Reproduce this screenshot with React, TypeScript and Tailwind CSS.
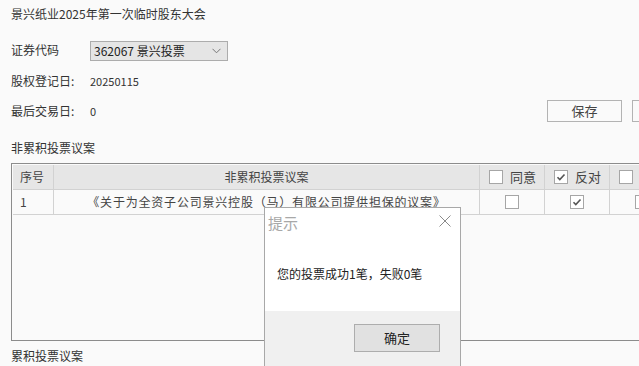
import { ReactNode } from "react";

const Box = ({ checked }: { checked?: boolean }) => (
  <span className="inline-flex items-center justify-center w-[14px] h-[14px] border border-[#a6a6a6] bg-white shrink-0">
    {checked && (
      <svg width="10" height="10" viewBox="0 0 10 10">
        <path d="M1.5 5.2 L3.8 7.5 L8.5 2.5" fill="none" stroke="#555" strokeWidth="1.6" />
      </svg>
    )}
  </span>
);

const Row = ({ children, className }: { children: ReactNode; className: string }) => (
  <div className={`flex items-center px-[11px] ${className}`}>{children}</div>
);

const App = () => {
  return (
    <div
      className="relative w-[639px] h-[366px] overflow-hidden bg-[#fafafa] text-[12px] text-[#333]"
      style={{ fontFamily: '"Noto Sans CJK SC", "Noto Sans", sans-serif' }}
    >
      <Row className="h-[28px]">景兴纸业2025年第一次临时股东大会</Row>

      <Row className="mt-[13px] h-[20px]">
        <span className="w-[79px] -mt-[3px]">证券代码</span>
        <div className="flex items-center justify-between w-[138px] h-[20px] border border-[#acacac] bg-[#e5e5e5] pl-[3px] pr-[6px] text-[#222]">
          <span>362067 景兴投票</span>
          <svg width="9" height="6" viewBox="0 0 9 6">
            <path d="M0.5 0.8 L4.5 4.8 L8.5 0.8" fill="none" stroke="#777" strokeWidth="1" />
          </svg>
        </div>
      </Row>

      <Row className="mt-[10px] h-[20px]">
        <span className="w-[79px]">股权登记日:</span>
        <span className="text-[11px]">20250115</span>
      </Row>

      <Row className="mt-[9px] h-[22px]">
        <span className="w-[79px] shrink-0">最后交易日:</span>
        <span className="w-[457px] shrink-0 text-[11px]">0</span>
        <div className="flex gap-[10px] shrink-0">
          <button className="w-[75px] h-[22px] border border-[#b3b3b3] bg-[#fafafa] text-[13px] text-[#444]">保存</button>
          <button className="w-[75px] h-[22px] border border-[#b3b3b3] bg-[#fafafa]" aria-label="提交" />
        </div>
      </Row>

      <Row className="mt-[16px] h-[20px]">非累积投票议案</Row>

      <div className="ml-[11px] mt-[5px] w-[720px] h-[178px] border border-[#8c8c8c] p-px">
        <div className="flex h-[25px] bg-[#e6e6e6] border-b border-[#d2d2d2] text-[#444]">
          <div className="w-[41px] border-r border-[#d2d2d2] flex items-center pl-[7px]">序号</div>
          <div className="w-[426px] border-r border-[#d2d2d2] flex items-center justify-center">非累积投票议案</div>
          <div className="w-[65px] border-r border-[#d2d2d2] flex items-center pl-[9px] gap-[7px]">
            <Box />
            <span className="text-[13px]">同意</span>
          </div>
          <div className="w-[65px] border-r border-[#d2d2d2] flex items-center pl-[9px] gap-[7px]">
            <Box checked />
            <span className="text-[13px]">反对</span>
          </div>
          <div className="w-[65px] border-r border-[#d2d2d2] flex items-center pl-[9px]">
            <Box />
          </div>
        </div>
        <div className="flex h-[25px] border-b border-[#d2d2d2] text-[#444]">
          <div className="w-[41px] border-r border-[#d2d2d2] flex items-center pl-[7px]">1</div>
          <div className="w-[426px] border-r border-[#d2d2d2] flex items-center justify-center tracking-[0.8px]">
            《关于为全资子公司景兴控股（马）有限公司提供担保的议案》
          </div>
          <div className="w-[65px] border-r border-[#d2d2d2] flex items-center justify-center">
            <Box />
          </div>
          <div className="w-[65px] border-r border-[#d2d2d2] flex items-center justify-center">
            <Box checked />
          </div>
          <div className="w-[65px] border-r border-[#d2d2d2] flex items-center justify-center">
            <Box />
          </div>
        </div>
      </div>

      <Row className="mt-[5px] h-[20px]">累积投票议案</Row>

      {/* 提示 dialog */}
      <div className="absolute left-[264px] top-[207px] w-[197px] h-[170px] border border-[#a8a8a8] bg-white flex flex-col">
        <div className="flex items-start justify-between h-[40px] pl-[3px] pr-[9px] pt-[4px]">
          <span className="text-[15px] text-[#a8a8a8]">提示</span>
          <svg width="12" height="12" viewBox="0 0 12 12" className="mt-[3px]">
            <path d="M0.5 0.5 L11.5 11.5 M11.5 0.5 L0.5 11.5" stroke="#8a8a8a" strokeWidth="1" />
          </svg>
        </div>
        <div className="h-[63px] flex items-start pl-[12px] pt-[17px] text-[#222]">
          您的投票成功1笔，失败0笔
        </div>
        <div className="flex-1 bg-[#f0f0f0] flex justify-end items-start pt-[13px] pr-[20px]">
          <button className="w-[86px] h-[28px] border border-[#adadad] bg-[#e1e1e1] text-[13px] text-[#222]">确定</button>
        </div>
      </div>
    </div>
  );
};

export default App;
